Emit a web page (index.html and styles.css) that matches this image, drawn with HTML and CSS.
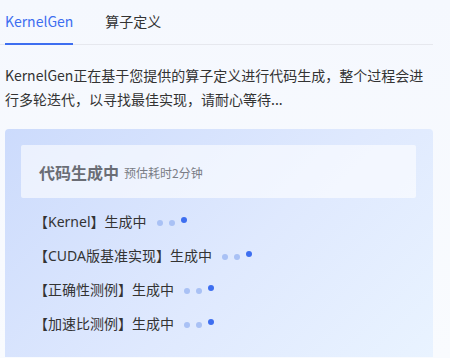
FILE: index.html
```html
<!DOCTYPE html>
<html lang="zh-CN">
<head>
<meta charset="utf-8">
<link rel="stylesheet" href="styles.css">
</head>
<body>
<div class="page">
  <nav class="tabs">
    <div class="tab tab-active">KernelGen</div>
    <div class="tab">算子定义</div>
  </nav>
  <p class="intro">KernelGen正在基于您提供的算子定义进行代码生成，整个过程会进行多轮迭代，以寻找最佳实现，请耐心等待...</p>
  <section class="card">
    <div class="card-head">
      <span class="card-title">代码生成中</span>
      <span class="card-sub">预估耗时2分钟</span>
    </div>
    <ul class="steps">
      <li class="step"><span class="step-text">【Kernel】生成中</span><span class="dots"><i class="dot"></i><i class="dot"></i><i class="dot dot-on"></i></span></li>
      <li class="step"><span class="step-text">【CUDA版基准实现】生成中</span><span class="dots"><i class="dot"></i><i class="dot"></i><i class="dot dot-on"></i></span></li>
      <li class="step"><span class="step-text">【正确性测例】生成中</span><span class="dots"><i class="dot"></i><i class="dot"></i><i class="dot dot-on"></i></span></li>
      <li class="step"><span class="step-text">【加速比测例】生成中</span><span class="dots"><i class="dot"></i><i class="dot"></i><i class="dot dot-on"></i></span></li>
    </ul>
  </section>
</div>
</body>
</html>
```

FILE: styles.css
```css
html, body {
  margin: 0;
  padding: 0;
}
body {
  background: linear-gradient(180deg, #f5f8fe 0%, #f9fbfe 100%);
  font-family: "Noto Sans CJK SC", "Noto Sans", sans-serif;
  color: #333;
  width: 450px;
  height: 358px;
  overflow: hidden;
}
.page {
  width: 433px;
}
.tabs {
  display: flex;
  gap: 32px;
  padding-left: 5px;
  height: 45px;
  box-shadow: inset 0 -1px 0 #e6e8ee;
}
.tab {
  font-size: 14px;
  line-height: 43px;
  height: 43px;
  color: #333;
  border-bottom: 2px solid transparent;
}
.tab-active {
  color: #3d6ef0;
  border-bottom-color: #3d6ef0;
}
.intro {
  margin: 18px 0 0;
  padding-left: 5px;
  font-size: 14px;
  line-height: 24px;
  color: #333;
}
.card {
  margin: 18px 0 0 5px;
  width: 428px;
  box-sizing: border-box;
  padding: 16px 17px 17px 16px;
  border-radius: 4px 4px 0 0;
  background: linear-gradient(135deg, #ccdbfc 0%, #dfe9fe 55%, #e9f3ff 100%);
}
.card-head {
  height: 53px;
  display: flex;
  align-items: center;
  gap: 5px;
  padding-left: 18px;
  background: rgba(255, 255, 255, 0.6);
  border-radius: 2px;
}
.card-title {
  font-size: 16px;
  font-weight: 700;
  color: #6a6d75;
}
.card-sub {
  font-size: 12px;
  color: #7a7d85;
  padding-top: 2px;
}
.steps {
  list-style: none;
  margin: 6px 0 0;
  padding: 0 0 0 13px;
}
.step {
  height: 34px;
  display: flex;
  align-items: center;
  font-size: 14px;
  color: #333;
}
.step-text {
  font-family: "Noto Sans", "Noto Sans CJK SC", sans-serif;
}
.dots {
  display: flex;
  align-items: center;
  gap: 6px;
  margin-left: 10px;
  padding-top: 3px;
}
.dot {
  width: 6px;
  height: 6px;
  border-radius: 50%;
  background: #a9c1f5;
}
.dot-on {
  background: #3d6ef0;
  transform: translateY(-3px);
}
```
